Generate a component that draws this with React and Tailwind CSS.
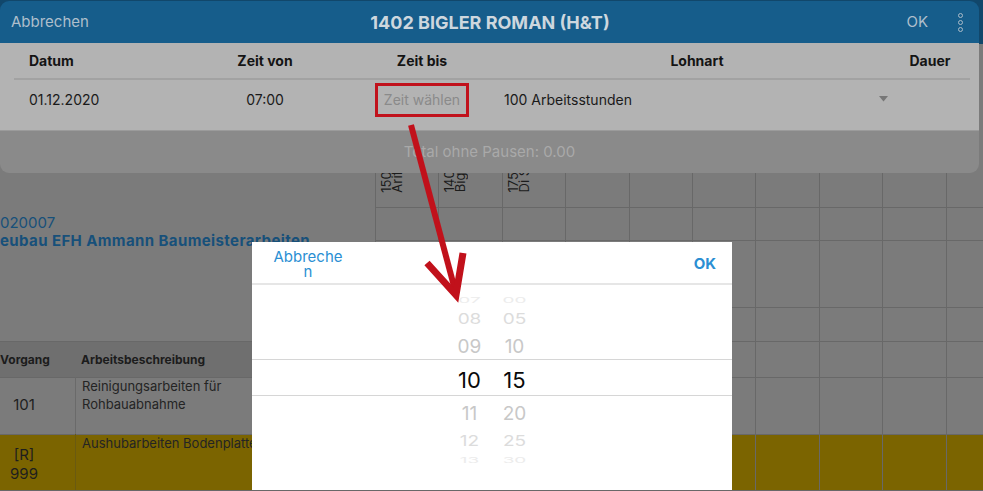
const FONT = { fontFamily: "Inter, 'Liberation Sans', sans-serif" };

const EMP = [
  { nr: "1501", name: "Arifi" },
  { nr: "1402", name: "Bigler" },
  { nr: "1751", name: "Di Santo" },
  {}, {}, {}, {}, {}, {}, {},
];

function EmpCells({ className = "" }) {
  return EMP.map((_, i) => (
    <div key={i} className={`w-[63.4px] shrink-0 border-l border-[#686868] ${className}`} />
  ));
}

function Background() {
  return (
    <div className="absolute inset-0 flex flex-col bg-[#7b7b7b]">
      <div className="h-[44px] shrink-0 bg-[#11476b]" />
      <div className="flex h-[297px] shrink-0">
        <div className="w-[375px] shrink-0 pt-[170px] text-[15px] leading-[18px] text-[#17507a]">
          <div>020007</div>
          <div className="font-bold tracking-[0.4px]">eubau EFH Ammann Baumeisterarbeiten</div>
        </div>
        <div className="flex flex-col">
          <div className="flex h-[164px]">
            {EMP.map((e, i) => (
              <div
                key={i}
                className="w-[63.4px] shrink-0 border-l border-[#686868] flex items-end pl-[5px] pb-[15px]"
              >
                {e.nr && (
                  <div className="[writing-mode:vertical-rl] rotate-180 text-[13px] leading-[11px] text-[#1c1c1c] whitespace-nowrap">
                    <div>{e.nr}</div>
                    <div>{e.name}</div>
                  </div>
                )}
              </div>
            ))}
          </div>
          <div className="flex h-[33px] border-t border-[#686868]"><EmpCells /></div>
          <div className="flex h-[67px] border-t border-[#686868]"><EmpCells /></div>
          <div className="flex h-[34px] border-t border-[#686868]"><EmpCells /></div>
        </div>
      </div>

      <div className="-ml-[27px] flex flex-col">
        <div className="flex h-[36px] border-t border-[#686868]">
          <div className="w-[102px] shrink-0 bg-[#6f6f6f] flex items-center justify-center pl-[2px] text-[12px] font-bold text-[#1c1c1c]">
            Vorgang
          </div>
          <div className="w-[300px] shrink-0 bg-[#6f6f6f] flex items-center pl-[6px] text-[12px] font-bold text-[#1c1c1c]">
            Arbeitsbeschreibung
          </div>
          <EmpCells />
        </div>
        <div className="flex h-[57px] border-t border-[#686868]">
          <div className="w-[102px] shrink-0 flex items-center justify-center pb-[1px] text-[15px] text-[#1e1e1e]">101</div>
          <div className="w-[300px] shrink-0 border-l border-[#6a6a6a] pl-[6px] -mt-[1px] text-[13px] leading-[18px] text-[#242424]">
            Reinigungsarbeiten für
            <br />
            Rohbauabnahme
          </div>
          <EmpCells />
        </div>
        <div className="flex h-[57px] border-t border-b border-[#686868] bg-[#7b6400]">
          <div className="w-[102px] shrink-0 flex flex-col items-center justify-center pt-[3px] text-[15px] leading-[19px] text-[#1e1e1e]">
            <div>[R]</div>
            <div>999</div>
          </div>
          <div className="w-[300px] shrink-0 border-l border-[#6a5a10] pl-[6px] -mt-[1px] text-[13px] leading-[18px] text-[#242424]">
            Aushubarbeiten Bodenplatte
          </div>
          <EmpCells />
        </div>
      </div>
    </div>
  );
}

function EditCard() {
  return (
    <div className="absolute left-0 top-[1px] w-[979px] h-[172px] rounded-[9px] overflow-hidden flex flex-col">
      <div className="h-[42px] shrink-0 bg-[#165d8b] flex items-center pl-[11px] pr-[16px] text-[15px] text-[#aebfcc]">
        <span className="flex-1">Abbrechen</span>
        <span className="text-center text-[18px] font-bold text-[#cdd7de] pl-[6px]">1402 BIGLER ROMAN (H&amp;T)</span>
        <span className="flex-1 flex items-center justify-end">
          <span className="mr-[30px]">OK</span>
          <span className="flex flex-col gap-[2px] items-center">
            <span className="w-[5px] h-[5px] rounded-full border-[1.5px] border-[#a9bbc8]" />
            <span className="w-[5px] h-[5px] rounded-full border-[1.5px] border-[#a9bbc8]" />
            <span className="w-[5px] h-[5px] rounded-full border-[1.5px] border-[#a9bbc8]" />
          </span>
        </span>
      </div>
      <div className="h-[88px] shrink-0 bg-[#b3b3b3] pl-[14px] pr-[9px] border-b border-[#9b9b9b]">
        <div className="flex h-[37px] border-b-2 border-[#a2a2a2] items-center text-[14px] font-bold text-[#141414]">
          <div className="w-[176px] pl-[15px]">Datum</div>
          <div className="w-[150px] text-center">Zeit von</div>
          <div className="w-[164px] text-center">Zeit bis</div>
          <div className="w-[386px] text-center">Lohnart</div>
          <div className="w-[80px] text-center">Dauer</div>
        </div>
        <div className="flex pt-[3px] text-[14px] text-[#1a1a1a] leading-[34px]">
          <div className="w-[176px] pl-[15px]">01.12.2020</div>
          <div className="w-[150px] text-center">07:00</div>
          <div className="w-[164px] flex justify-center">
            <div className="w-[94px] h-[34px] border-[3px] border-[#c1121c] flex items-center justify-center text-[#8a8a8a] leading-none">
              Zeit wählen
            </div>
          </div>
          <div className="w-[386px] flex items-center pr-[2px]">
            <span className="flex-1">100 Arbeitsstunden</span>
            <svg width="9" height="6" viewBox="0 0 9 6" className="-mt-[2px]">
              <path d="M0 0 H9 L4.5 5.5 Z" fill="#777" />
            </svg>
          </div>
          <div className="w-[80px]" />
        </div>
      </div>
      <div className="flex-1 bg-[#8a8a8a] flex items-center justify-center text-[15px] text-[#a9a9a9]">
        Total ohne Pausen: 0.00
      </div>
    </div>
  );
}

const HOURS = [
  { t: ["07", "00"], h: "h-[16px]", c: "text-[19px] text-[#ececec] scale-y-[0.4]" },
  { t: ["08", "05"], h: "h-[22px]", c: "text-[19px] text-[#dcdcdc] scale-y-[0.75]" },
  { t: ["09", "10"], h: "h-[29px]", c: "text-[19px] text-[#c8c8c8] pt-[4px]" },
  { t: ["10", "15"], h: "h-[37px]", c: "text-[22px] text-[#0a0a0a] pt-[5px]", sel: true },
  { t: ["11", "20"], h: "h-[32px]", c: "text-[19px] text-[#c8c8c8] pt-[2px]" },
  { t: ["12", "25"], h: "h-[24px]", c: "text-[19px] text-[#dcdcdc] scale-y-[0.75] pt-[3px]" },
  { t: ["13", "30"], h: "h-[14px]", c: "text-[19px] text-[#ececec] scale-y-[0.4] pt-[4px]" },
];

function TimePicker() {
  return (
    <div className="absolute left-[252px] top-[242px] w-[480px] h-[248px] bg-white flex flex-col">
      <div className="h-[43px] shrink-0 border-b-2 border-[#e6e6e6] flex items-center justify-between pl-[20px] pr-[16px] text-[15px] text-[#2b8fd3]">
        <span className="w-[72px] text-center leading-[15px] pt-[3px]">Abbreche<br />n</span>
        <span className="font-bold pt-[4px]">OK</span>
      </div>
      <div className="flex-1 overflow-hidden pt-[7px]">
        {HOURS.map((r, i) => (
          <div
            key={i}
            className={`${r.h} flex items-center justify-center gap-[20px] leading-none ${
              r.sel ? "border-y border-[#d6d6d6]" : ""
            }`}
          >
            <span className={`w-[25px] text-center ${r.c}`}>{r.t[0]}</span>
            <span className={`w-[25px] text-center ${r.c}`}>{r.t[1]}</span>
          </div>
        ))}
      </div>
    </div>
  );
}

function Arrow() {
  return (
    <svg className="absolute inset-0 pointer-events-none" width="983" height="491">
      <line x1="411" y1="125" x2="455" y2="290" stroke="#c1111b" strokeWidth="6" />
      <polyline points="427,263 456,295 463,253" fill="none" stroke="#c1111b" strokeWidth="7" strokeLinejoin="miter" />
    </svg>
  );
}

export default function App() {
  return (
    <div className="relative w-[983px] h-[491px] overflow-hidden" style={FONT}>
      <Background />
      <EditCard />
      <TimePicker />
      <Arrow />
    </div>
  );
}
